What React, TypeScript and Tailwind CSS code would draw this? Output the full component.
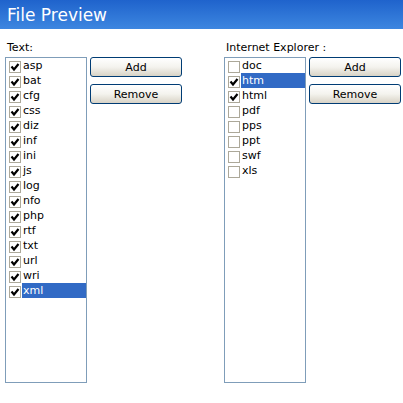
import React from 'react';

interface Item {
  name: string;
  checked: boolean;
  selected?: boolean;
}

const textItems: Item[] = [
  'asp', 'bat', 'cfg', 'css', 'diz', 'inf', 'ini', 'js',
  'log', 'nfo', 'php', 'rtf', 'txt', 'url', 'wri', 'xml',
].map((name) => ({ name, checked: true, selected: name === 'xml' }));

const ieItems: Item[] = [
  { name: 'doc', checked: false },
  { name: 'htm', checked: true, selected: true },
  { name: 'html', checked: true },
  { name: 'pdf', checked: false },
  { name: 'pps', checked: false },
  { name: 'ppt', checked: false },
  { name: 'swf', checked: false },
  { name: 'xls', checked: false },
];

function CheckBox({ checked }: { checked: boolean }) {
  return (
    <span className="w-[12px] h-[12px] shrink-0 border border-[#aca899] bg-white flex items-center justify-center">
      {checked && (
        <svg width="10" height="10" viewBox="0 0 10 10">
          <path d="M1.5 4.5 L4 7.5 L8.5 2" fill="none" stroke="#000" strokeWidth="2.2" />
        </svg>
      )}
    </span>
  );
}

function XpButton({ label }: { label: string }) {
  return (
    <button className="w-[92px] h-[20px] rounded-[3px] border border-[#003c74] bg-gradient-to-b from-white via-[#f4f3ee] to-[#d8d3c6] text-[11px] leading-[13px] text-black">
      {label}
    </button>
  );
}

function ListGroup({ label, items }: { label: string; items: Item[] }) {
  return (
    <div className="flex flex-col">
      <div className="pl-[2px] h-[13px] leading-[13px] text-[11px] text-black">{label}</div>
      <div className="flex gap-[3px] mt-[3px]">
        <div className="w-[82px] h-[326px] border border-[#7f9db9] bg-white flex flex-col">
          {items.map((it) => (
            <div key={it.name} className="flex items-center h-[15px]">
              <span className="ml-[3px] mt-[3px]">
                <CheckBox checked={it.checked} />
              </span>
              <span
                className={`flex-1 ml-[1px] px-[1px] h-[15px] leading-[15px] text-[11px] ${
                  it.selected ? 'bg-[#316ac5] text-white' : 'text-black'
                }`}
              >
                {it.name}
              </span>
            </div>
          ))}
        </div>
        <div className="flex flex-col gap-[7px]">
          <XpButton label="Add" />
          <XpButton label="Remove" />
        </div>
      </div>
    </div>
  );
}

export default function App() {
  return (
    <div className="w-[403px] h-[403px] bg-white font-['DejaVu_Sans',sans-serif]">
      <div className="h-[29px] bg-gradient-to-b from-[#1f63cc] to-[#3d86e0] pl-[7px] flex items-center">
        <span className="text-[17px] leading-[20px] text-white">File Preview</span>
      </div>
      <div className="flex gap-[42px] pl-[5px] pt-[12px]">
        <ListGroup label="Text:" items={textItems} />
        <ListGroup label="Internet Explorer :" items={ieItems} />
      </div>
    </div>
  );
}
